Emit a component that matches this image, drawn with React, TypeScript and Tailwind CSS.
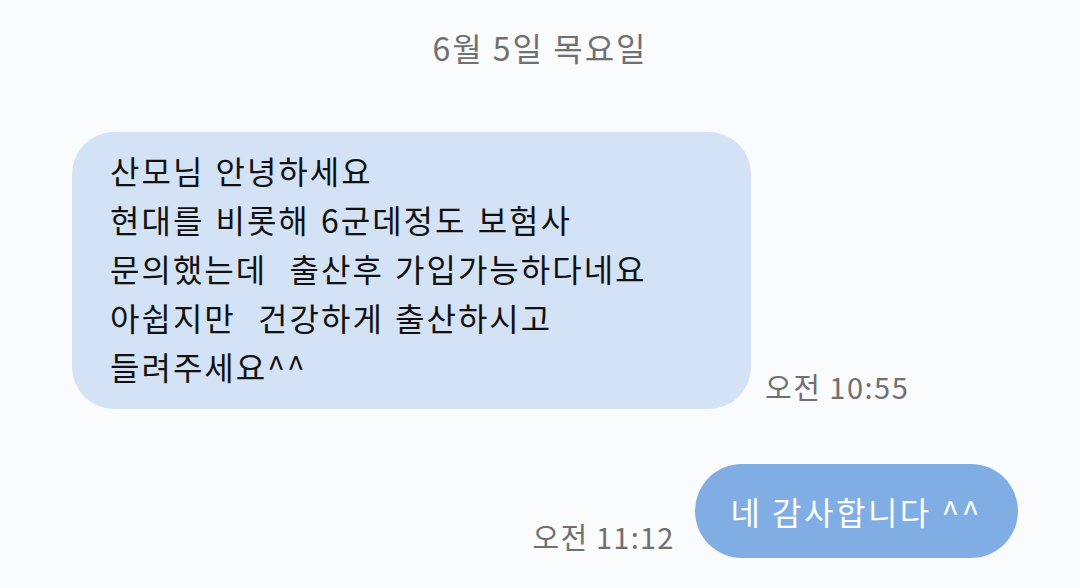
import React from "react";

const font = { fontFamily: '"Noto Sans CJK KR", "Noto Sans", sans-serif' };

const App = () => {
  return (
    <div
      className="w-[1080px] h-[588px] bg-[#fafbfd] overflow-hidden flex flex-col"
      style={font}
    >
      {/* date divider */}
      <div className="pt-[25px] flex justify-center text-[32px] leading-[44px] tracking-[2px] text-[#707070]">
        6월 5일 목요일
      </div>

      {/* incoming */}
      <div className="mt-[63px] pl-[72px] flex items-end gap-[14px]">
        <div className="w-[679px] bg-[#d3e3f5] rounded-[42px] pl-[38px] pr-6 pt-[14px] pb-[18px] text-[32px] leading-[49px] tracking-[2px] [word-spacing:2px] text-[#111] whitespace-pre">
          {"산모님 안녕하세요\n현대를 비롯해 6군데정도 보험사\n문의했는데  출산후 가입가능하다네요\n아쉽지만  건강하게 출산하시고\n들려주세요^^"}
        </div>
        <span className="pb-[2px] text-[29px] leading-[42px] tracking-[1.5px] text-[#707070]">오전 10:55</span>
      </div>

      {/* outgoing */}
      <div className="mt-[55px] pr-[62px] flex justify-end items-end gap-[20px]">
        <span className="pb-[1px] text-[29px] leading-[42px] tracking-[1.2px] text-[#707070]">오전 11:12</span>
        <div className="h-[94px] px-[36px] flex items-center bg-[#80aee4] rounded-full text-[32px] tracking-[2.5px] text-white">
          네 감사합니다 ^^
        </div>
      </div>
    </div>
  );
};

export default App;
